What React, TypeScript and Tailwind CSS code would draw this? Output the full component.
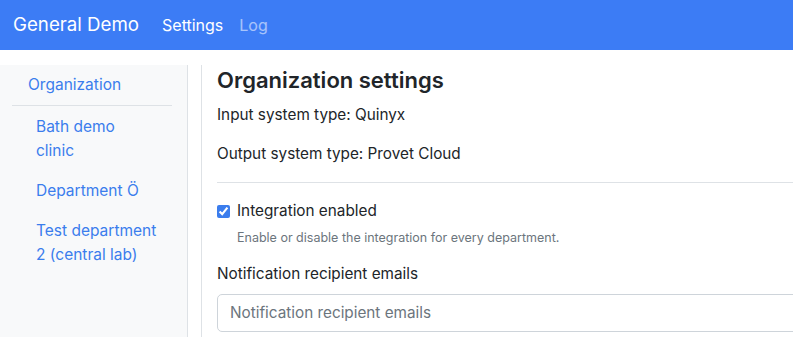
import React from "react";

export default function App() {
  return (
    <div className="w-[793px] h-[337px] overflow-hidden bg-white text-[#212529]" style={{ fontFamily: "Inter, 'Liberation Sans', sans-serif" }}>
      <div className="w-[1000px]">
        <nav className="h-[50px] bg-[#3c7cf5] flex items-center pl-[13px]">
          <span className="text-white text-[18.7px] leading-none">General Demo</span>
          <span className="text-white text-[16px] ml-[23px]">Settings</span>
          <span className="text-white/55 text-[16px] ml-[16px]">Log</span>
        </nav>
        <div className="flex pt-[15px]">
          <aside className="w-[188px] h-[300px] bg-[#f8f9fa] border-r border-[#dee2e6] shrink-0 pt-[8px]">
            <div className="pl-[28px] text-[15.5px] leading-[24px] text-[#3b7ded]">Organization</div>
            <div className="mx-[12px] mt-[8px] border-t border-[#dee2e6] w-[160px]" />
            <div className="pl-[36px] pr-[20px] pt-[9px] flex flex-col gap-[16px] text-[15.5px] leading-[24px] text-[#3b7ded]">
              <div className="w-[110px]">Bath demo clinic</div>
              <div>Department Ö</div>
              <div>Test department 2 (central lab)</div>
            </div>
          </aside>
          <div className="w-[13px] shrink-0" />
          <main className="flex-1 border-l border-[#dee2e6] pl-[15px]">
            <h4 className="text-[22px] font-semibold leading-[28px] mt-[1px]">Organization settings</h4>
            <p className="text-[15.3px] leading-[24px] mt-[9px]">Input system type: Quinyx</p>
            <p className="text-[15.3px] leading-[24px] mt-[15px]">Output system type: Provet Cloud</p>
            <hr className="border-t border-[#dee2e6] mt-[16px]" />
            <div className="flex items-center mt-[16px]">
              <input type="checkbox" defaultChecked className="w-[13px] h-[13px] accent-[#3b7ded]" />
              <span className="ml-[7px] text-[15.3px] leading-[24px]">Integration enabled</span>
            </div>
            <div className="ml-[20px] mt-[5px] text-[12.5px] leading-[20px] text-[#6c757d]">Enable or disable the integration for every department.</div>
            <div className="mt-[14px] text-[15.3px] leading-[24px]">Notification recipient emails</div>
            <div className="mt-[8px] w-[700px] h-[38px] border border-[#ced4da] rounded-[5px] flex items-center pl-[12px] text-[15.3px] text-[#6c757d]">Notification recipient emails</div>
          </main>
        </div>
      </div>
    </div>
  );
}
